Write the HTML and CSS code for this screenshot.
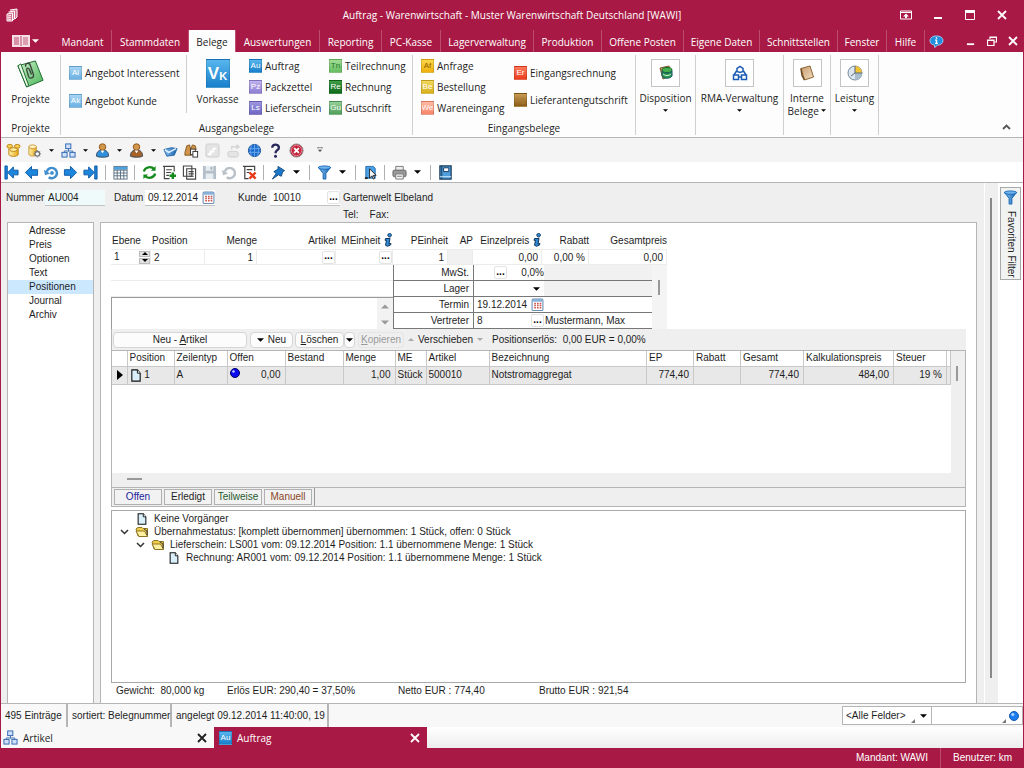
FILE: index.html
```html
<!DOCTYPE html>
<html lang="de">
<head>
    <meta charset="UTF-8">
    <meta name="viewport" content="width=device-width, initial-scale=1.0">
    <title>Auftrag - Warenwirtschaft</title>
    <link rel="stylesheet" href="styles.css">
</head>
<body>

    <svg class="sprite" aria-hidden="true">
        <defs>
            <linearGradient id="gGold" x1="0" x2="1"><stop offset="0" stop-color="#fff3b0"/><stop offset="1" stop-color="#eaa916"/></linearGradient>
            <linearGradient id="gBlue" x1="0" x2="1"><stop offset="0" stop-color="#8cc4f5"/><stop offset="1" stop-color="#155fa8"/></linearGradient>
            <linearGradient id="gGreen" x1="0" x2="1" y2="1"><stop offset="0" stop-color="#c9efc9"/><stop offset="1" stop-color="#4cb65a"/></linearGradient>
            <linearGradient id="gTan" x1="0" x2="1" y2="1"><stop offset="0" stop-color="#c79b6c"/><stop offset="1" stop-color="#f3e0c4"/></linearGradient>
        </defs>
        <symbol id="net" viewBox="0 0 16 16"><path d="M8 6v3M3.500 10.500V8.500h9v2" fill="none" stroke="#3c6fb4"/><g fill="#cfe0fb" stroke="#2e64b0"><rect x="5" y="1" width="5.500" height="5"/><rect x="1" y="10" width="5.500" height="5"/><rect x="9.500" y="10" width="5.500" height="5"/></g></symbol>
        <symbol id="page" viewBox="0 0 12 14"><path d="M1.500 1h6l3 3.500V13h-9z" fill="#d9f0fb" stroke="#111" stroke-width="1.200"/><path d="M7.500 1v3.500h3" fill="#fff" stroke="#111"/></symbol>
        <symbol id="folder" viewBox="0 0 14 12"><path d="M1 3l2-1.500h4l1 1h4.500V10H3z" fill="#f2cd4a" stroke="#8d7424"/><path d="M1 5h8.500l3 5.500H4z" fill="#fff0a0" stroke="#8d7424"/><path d="M9 3l3 2v4" fill="none" stroke="#3b3b3b"/></symbol>
        <symbol id="cal" viewBox="0 0 12 12"><rect x="1" y="1" width="10" height="10.500" rx="1" fill="#fff" stroke="#6b8fb5"/><path d="M1.500 1.500h9v2h-9z" fill="#86b4dd"/><path d="M3 5h1.500M5.500 5H7M8 5h1.500M3 7h1.500M5.500 7H7M8 7h1.500M3 9h1.500M5.500 9H7M8 9h1.500" stroke="#d0504a" stroke-width="1.400"/></symbol>
        <symbol id="info" viewBox="0 0 10 14"><path d="M5.500 .800a1.800 1.800 0 1 1 1 3.200 1.800 1.800 0 0 1-1-3.200zM2.500 5.500H7L6 11l2-.500-.500 1.500-3 1.300-2-1 1-5H2z" fill="#2f8ad6" stroke="#12365c"/></symbol>
        <symbol id="funnel" viewBox="0 0 16 16"><path d="M1.500 2.500L6.500 9v6h3V9l5-6.500z" fill="url(#gBlue)" stroke="#1769b5"/><ellipse cx="8" cy="2.800" rx="6.500" ry="1.800" fill="#6eb2ee" stroke="#1769b5"/></symbol>
        <symbol id="down" viewBox="0 0 8 4"><path d="M0 0h8L4 4z"/></symbol>
        <symbol id="up" viewBox="0 0 8 4"><path d="M0 4h8L4 0z"/></symbol>
        <symbol id="grip" viewBox="0 0 4 4"><path d="M4 0v4H0z" fill="#777"/></symbol>
        <symbol id="close" viewBox="0 0 10 10"><path d="M1 1l8 8M9 1L1 9" fill="none" stroke="currentColor" stroke-width="1.800"/></symbol>
        <symbol id="arrow" viewBox="0 0 16 16"><path d="M1.500 8L8 1.500V5h6.500v6H8v3.500z" fill="#1c86dd" stroke="#0c5aa8"/></symbol>
        <symbol id="first" viewBox="0 0 16 16"><path d="M1 1h2.500v14H1zM4 8l6-6v3.500h5v5h-5V14z" fill="#1c86dd" stroke="#0c5aa8"/></symbol>
        <symbol id="undo" viewBox="0 0 16 16"><path d="M5 13A5.500 5.500 0 1 0 3 7" fill="none" stroke="currentColor" stroke-width="2.600"/><path d="M0 5l1 6 5.500-2z" fill="currentColor"/></symbol>
        <symbol id="person" viewBox="0 0 16 16"><path d="M1.500 14c0-4 2-6.500 6.500-6.500s6.500 2.500 6.500 6.500c-2 1.500-11 1.500-13 0z" fill="currentColor" stroke="#345"/><circle cx="8" cy="4.300" r="3.500" fill="#d5964a" stroke="#8a5a20"/><path d="M6 8l2 3 2-3z" fill="#fff"/></symbol>
    </svg>

    <header class="titlebar">
        <svg class="app-icon" viewBox="0 0 12 14"><path d="M4 2l7-1v8l-2 2M2.500 4l6-1v8l-2 1M1 6l5.500-1v8L1 13z" fill="#d6738f" stroke="#fff"/><path d="M2 8l3-.500M2 10l3-.500M2 12l3-.500" stroke="#fff"/></svg>
        <h1>Auftrag - Warenwirtschaft - Muster Warenwirtschaft Deutschland [WAWI]</h1>
        <div class="window-buttons">
            <button type="button" aria-label="Menüband"><svg viewBox="0 0 12 10" width="12" height="10"><path d="M.500 1h11v8H.500zM.500 2.500h11" fill="none" stroke="#fff"/><path d="M6 3.500l3 3H7V8H5V6.500H3z" fill="#fff"/></svg></button>
            <button type="button" aria-label="Minimieren"><svg viewBox="0 0 10 10" width="10" height="10"><path d="M1 7h8v2H1z" fill="#fff"/></svg></button>
            <button type="button" aria-label="Maximieren"><svg viewBox="0 0 10 10" width="10" height="10"><path d="M.500 1.500h9v8h-9z" fill="none" stroke="#fff"/><path d="M0 0h10v3H0z" fill="#fff"/></svg></button>
            <button type="button" aria-label="Schließen"><svg width="10" height="10"><use href="#close"/></svg></button>
        </div>
    </header>

    <nav class="menubar">
        <button type="button" class="file-menu" aria-label="Datei">
            <svg viewBox="0 0 18 12" width="18" height="12"><path d="M0 0h18v12H0z" fill="#f6dfe6"/><path d="M9 1v10M2 3h5M2 5h5M2 7h5M2 9h5" stroke="#b7476a"/><path d="M11 2h5v8h-5z" fill="#dc9fb1"/></svg>
            <svg width="7" height="4" fill="#fff"><use href="#down"/></svg>
        </button>
        <a href="#">Mandant</a>
        <a href="#">Stammdaten</a>
        <a href="#" class="active">Belege</a>
        <a href="#">Auswertungen</a>
        <a href="#">Reporting</a>
        <a href="#">PC-Kasse</a>
        <a href="#">Lagerverwaltung</a>
        <a href="#">Produktion</a>
        <a href="#">Offene Posten</a>
        <a href="#">Eigene Daten</a>
        <a href="#">Schnittstellen</a>
        <a href="#">Fenster</a>
        <a href="#">Hilfe</a>
        <button type="button" class="help" aria-label="Info"><svg viewBox="0 0 16 14" width="15" height="13"><path d="M8 1c4 0 7 2 7 5s-3 5-6 5l-3 2.500V11C3 10.500 1 9 1 6s3-5 7-5z" fill="#1f8fe0" stroke="#9fd2f7"/><path d="M8 2.500v1.500M6.500 5.500H8V9M6.500 9h3" fill="none" stroke="#fff" stroke-width="1.500"/></svg></button>
        <div class="mdi-buttons">
            <button type="button" aria-label="Fenster minimieren"><svg viewBox="0 0 10 10" width="9" height="9"><path d="M1 7h8v2H1z" fill="#fff"/></svg></button>
            <button type="button" aria-label="Fenster wiederherstellen"><svg viewBox="0 0 10 10" width="10" height="10"><path d="M3 3V1h6.500v5H7M.500 4H7v5.500H.500zM0 4.500h7M3 1.500h7" fill="none" stroke="#fff" stroke-width="1.200"/></svg></button>
            <button type="button" aria-label="Fenster schließen"><svg width="10" height="10"><use href="#close"/></svg></button>
        </div>
    </nav>

    <section class="ribbon">
        <div class="group projects">
            <div class="group-body">
                <button type="button" class="big">
                    <svg viewBox="0 0 30 30" width="29" height="29"><path d="M2 7L20 2l8 20-17 7z" fill="url(#gGreen)" stroke="#1b6a2a"/><path d="M2 7l3-2 8 22-2 2z" fill="#e8f6e8" stroke="#1b6a2a"/><path d="M10 8c-1-4 4-5 5-1l3 9c1 4-4 5-5 2L11 11c0-2 2-2 3 0l2 5" fill="none" stroke="#3a463a" stroke-width="1.400"/></svg>
                    <span>Projekte</span>
                </button>
            </div>
            <h2>Projekte</h2>
        </div>

        <div class="group sales">
            <div class="group-body">
                <div class="stack two divided">
                    <button type="button"><i class="tile sky">Ai</i>Angebot Interessent</button>
                    <button type="button"><i class="tile sky">Ak</i>Angebot Kunde</button>
                </div>
                <button type="button" class="big"><i class="tile large blue">V<small>K</small></i><span>Vorkasse</span></button>
                <div class="stack">
                    <button type="button"><i class="tile blue">Au</i>Auftrag</button>
                    <button type="button"><i class="tile violet">Pz</i>Packzettel</button>
                    <button type="button"><i class="tile purple">Ls</i>Lieferschein</button>
                </div>
                <div class="stack">
                    <button type="button"><i class="tile light-green">Tn</i>Teilrechnung</button>
                    <button type="button"><i class="tile green">Re</i>Rechnung</button>
                    <button type="button"><i class="tile mid-green">Gu</i>Gutschrift</button>
                </div>
            </div>
            <h2>Ausgangsbelege</h2>
        </div>

        <div class="group purchase">
            <div class="group-body">
                <div class="stack">
                    <button type="button"><i class="tile amber">Af</i>Anfrage</button>
                    <button type="button"><i class="tile yellow">Be</i>Bestellung</button>
                    <button type="button"><i class="tile salmon">We</i>Wareneingang</button>
                </div>
                <div class="stack two">
                    <button type="button"><i class="tile red">Er</i>Eingangsrechnung</button>
                    <button type="button"><i class="tile brown">Lg</i>Lieferantengutschrift</button>
                </div>
            </div>
            <h2>Eingangsbelege</h2>
        </div>

        <button type="button" class="group big framed w60">
            <i class="frame"><svg viewBox="0 0 16 16" width="16" height="16"><path d="M2 3l9-2 3 9-9 4z" fill="#cfa36a" stroke="#7b5a2c"/><ellipse cx="9" cy="5" rx="5" ry="2.500" fill="#48b04f" stroke="#176a2c"/><path d="M4 6v5c2 3 8 3 10 0V6c-2 3-8 3-10 0z" fill="#289a4e" stroke="#175a6c"/><path d="M5 9c2 2 6 2 8 0" fill="none" stroke="#d9f3d0"/></svg></i>
            <span>Disposition</span>
            <svg class="caret" width="5" height="3"><use href="#down"/></svg>
        </button>
        <button type="button" class="group big framed w88">
            <i class="frame"><svg viewBox="0 0 16 16" width="16" height="16" fill="none" stroke="#1b5bb5" stroke-width="1.500"><path d="M5 6.500V3.500L8 1.500l3 2v3L8 7.500zM4.500 6L2 10M11.500 6l2.500 4M1.500 10h5v4.500h-5zM9.500 10h5v4.500h-5zM6.500 12h3"/></svg></i>
            <span>RMA-Verwaltung</span>
            <svg class="caret" width="5" height="3"><use href="#down"/></svg>
        </button>
        <button type="button" class="group big framed w47">
            <i class="frame"><svg viewBox="0 0 16 16" width="16" height="16"><path d="M2 3.500L11 1l3.500 11L5.500 15z" fill="url(#gTan)" stroke="#8b6334"/><path d="M2 3.500l1 7 2.500 4.500" fill="none" stroke="#6d4a20" stroke-width="1.500"/></svg></i>
            <span>Interne<br>Belege <svg class="inline-caret" width="5" height="3"><use href="#down"/></svg></span>
        </button>
        <button type="button" class="group big framed w48">
            <i class="frame"><svg viewBox="0 0 16 16" width="16" height="16"><circle cx="8" cy="8" r="7" fill="#dde6ee" stroke="#72889c"/><path d="M8 8V1a7 7 0 0 1 7 7z" fill="#f1c232"/><path d="M8 8h7a7 7 0 0 1-7 7z" fill="#a9bccb"/><path d="M8 1v7l-4 3M8 8h7" fill="none" stroke="#576b7c"/></svg></i>
            <span>Leistung</span>
            <svg class="caret" width="5" height="3"><use href="#down"/></svg>
        </button>
        <button type="button" class="collapse" aria-label="Menüband ausblenden"><svg viewBox="0 0 9 6" width="9" height="6"><path d="M1 5l3.500-3.500L8 5" fill="none" stroke="#555" stroke-width="1.800"/></svg></button>
    </section>

    <div class="toolbar quick">
        <button type="button" aria-label="Mandanten"><svg viewBox="0 0 16 16"><path d="M3 6v6c0 3 10 3 10 0V6" fill="url(#gGold)" stroke="#b97f12"/><ellipse cx="4" cy="3.500" rx="3" ry="2" fill="#fbd34f" stroke="#b97f12"/><ellipse cx="12" cy="3.500" rx="3" ry="2" fill="#fbd34f" stroke="#b97f12"/><ellipse cx="8" cy="7" rx="4" ry="2" fill="#fff0a0" stroke="#b97f12"/></svg></button>
        <button type="button" aria-label="Datenbank"><svg viewBox="0 0 16 16"><path d="M2 4v8c0 2.500 8 2.500 8 0V4" fill="url(#gGold)" stroke="#c9973a"/><ellipse cx="6" cy="4" rx="4" ry="2" fill="#fff3c0" stroke="#c9973a"/><circle cx="11" cy="11.500" r="2.500" fill="#fff" stroke="#777" stroke-width="1.500"/><path d="M11 7.500v1M11 14.500v1M7 11.500h1M14 11.500h1M8.500 9l.700.700M13 13.500l.700.700M13.700 9l-.700.700M8.500 14l.700-.700" stroke="#777"/></svg></button>
        <button type="button" class="drop" aria-label="Auswahl"><svg><use href="#down"/></svg></button>
        <button type="button" aria-label="Artikel"><svg><use href="#net"/></svg></button>
        <button type="button" class="drop" aria-label="Auswahl"><svg><use href="#down"/></svg></button>
        <button type="button" aria-label="Kunden" class="c-blue"><svg><use href="#person"/></svg></button>
        <button type="button" class="drop" aria-label="Auswahl"><svg><use href="#down"/></svg></button>
        <button type="button" aria-label="Lieferanten" class="c-brown"><svg><use href="#person"/></svg></button>
        <button type="button" class="drop" aria-label="Auswahl"><svg><use href="#down"/></svg></button>
        <button type="button" aria-label="Belege"><svg viewBox="0 0 16 16"><path d="M1 7l8-2 6 1-3 7-8 1z" fill="url(#gBlue)" stroke="#2468a8"/><path d="M2 7l4 3 8-4" fill="none" stroke="#e3f2ff" stroke-width="1.500"/></svg></button>
        <button type="button" aria-label="Suchen"><svg viewBox="0 0 16 16"><path d="M1 10l2-7 3-1 1 5 2-5 3 1 1 4H8v6H1z" fill="#d0954a" stroke="#85561c"/><g fill="#fff" stroke="#333"><rect x="7" y="6.500" width="5" height="6"/><rect x="9.500" y="9" width="5" height="6"/></g></svg></button>
        <button type="button" aria-label="Diagramm" disabled><svg viewBox="0 0 16 16"><rect x="1" y="1" width="14" height="14" rx="2" fill="#e4e4e4" stroke="#cfcfcf"/><path d="M3 12h3V9h3V6h3" fill="none" stroke="#fff" stroke-width="2"/></svg></button>
        <button type="button" aria-label="Export" disabled><svg viewBox="0 0 16 16"><rect x="2" y="9" width="11" height="6" rx="2" fill="#e4e4e4" stroke="#cfcfcf"/><path d="M6 7V4h7M11 2l3 2-3 2" fill="none" stroke="#d5d5d5" stroke-width="1.500"/></svg></button>
        <button type="button" aria-label="Internet"><svg viewBox="0 0 16 16"><circle cx="8" cy="8" r="6.500" fill="#1f6fd0" stroke="#164f98"/><path d="M2 6h12M2 10h12M8 1.500v13M5 2.500c-2 3-2 8 0 11M11 2.500c2 3 2 8 0 11" fill="none" stroke="#6aa6ea"/></svg></button>
        <button type="button" aria-label="Hilfe"><svg viewBox="0 0 16 16"><path d="M4.500 5c0-5 8-4 7 .500C11 8 8 7.500 8 11" fill="none" stroke="#26265c" stroke-width="2.500"/><circle cx="8" cy="14" r="1.600" fill="#26265c"/></svg></button>
        <button type="button" aria-label="Beenden"><svg viewBox="0 0 16 16"><circle cx="8" cy="8" r="7" fill="#c3243c" stroke="#8e8e8e"/><circle cx="8" cy="8" r="5.500" fill="none" stroke="#eb8794"/><path d="M5.500 5.500l5 5M10.500 5.500l-5 5" stroke="#fff" stroke-width="2"/></svg></button>
        <button type="button" class="more" aria-label="Anpassen"><svg viewBox="0 0 8 7" width="6" height="6"><path d="M0 .500h8" stroke="#555"/><path d="M1 3h6L4 6z" fill="#555"/></svg></button>
    </div>

    <div class="toolbar nav">
        <button type="button" aria-label="Erster"><svg><use href="#first"/></svg></button>
        <button type="button" aria-label="Zurück"><svg><use href="#arrow"/></svg></button>
        <button type="button" aria-label="Aktualisieren" class="c-mid"><svg viewBox="0 0 16 16"><use href="#undo" width="16" height="16"/><circle cx="8.500" cy="8.500" r="2" fill="#3f8dcc"/></svg></button>
        <button type="button" aria-label="Weiter" class="flip"><svg><use href="#arrow"/></svg></button>
        <button type="button" aria-label="Letzter" class="flip"><svg><use href="#first"/></svg></button>
        <span class="sep"></span>
        <button type="button" aria-label="Tabelle"><svg viewBox="0 0 16 16"><rect x="1" y="1.500" width="14" height="13.500" fill="#fff" stroke="#5c6f82"/><path d="M1 2h14v3H1z" fill="#4aa3e0"/><path d="M1 5.500h14M1 8.500h14M1 11.500h14M4.500 5v10M8 5v10M11.500 5v10" stroke="#5c6f82"/></svg></button>
        <span class="sep"></span>
        <button type="button" aria-label="Neu laden"><svg viewBox="0 0 16 16" fill="none" stroke="#158a1c" stroke-width="2.400"><path d="M2 7c1-5 8-6 11-2.500M14 9c-1 5-8 6-11 2.500"/><path d="M14.500 1v5H9.500zM1.500 15v-5h5z" fill="#158a1c" stroke="none"/></svg></button>
        <button type="button" aria-label="Neu"><svg viewBox="0 0 16 16"><path d="M13 7V1.500H2.500v13H8M1 1.500h2M4.500 5h6M4.500 8h5M4.500 11h3" fill="none" stroke="#444" stroke-width="1.200"/><path d="M11.500 8v7M8 11.500h7" stroke="#158a1c" stroke-width="2.600"/></svg></button>
        <button type="button" aria-label="Kopieren"><svg viewBox="0 0 16 16" fill="#fff" stroke="#444" stroke-width="1.200"><path d="M1.500 1h9v11h-9zM5 4h9.500v11H5z"/><path d="M7 7h5.500M7 9.500h5.500M7 12h5.500"/></svg></button>
        <button type="button" aria-label="Speichern" disabled><svg viewBox="0 0 16 16"><path d="M1 1h14v14H1z" fill="#b4bfca"/><path d="M4 1h8v5H4zM4 9h8v6H4z" fill="#e8edf1"/><path d="M9 2h2v3H9z" fill="#a4b0bc"/></svg></button>
        <button type="button" aria-label="Rückgängig" class="c-grey" disabled><svg><use href="#undo"/></svg></button>
        <button type="button" aria-label="Löschen"><svg viewBox="0 0 16 16"><path d="M13.500 6V1.500H3v13h4M1 1.500h3M5 5h6M5 8h3" fill="none" stroke="#444" stroke-width="1.300"/><path d="M8 8l6.500 6.500M14.500 8L8 14.500" stroke="#e93a1c" stroke-width="2.600"/></svg></button>
        <span class="sep"></span>
        <button type="button" aria-label="Anheften"><svg viewBox="0 0 16 16"><path d="M7.500 1.500l7 4.500-2 1-1.500 5-3-1.500L1.500 15 5.500 9 3 7l4.500-2.500z" fill="#1b78c8" stroke="#124a82"/></svg></button>
        <button type="button" class="drop" aria-label="Auswahl"><svg><use href="#down"/></svg></button>
        <span class="sep"></span>
        <button type="button" aria-label="Filter"><svg><use href="#funnel"/></svg></button>
        <button type="button" class="drop" aria-label="Auswahl"><svg><use href="#down"/></svg></button>
        <span class="sep"></span>
        <button type="button" aria-label="Auswählen"><svg viewBox="0 0 16 16"><path d="M3 1.500h8l2 2V14H3z" fill="#4ba1e8" stroke="#246aa8"/><path d="M7 4v10l2.500-2.500 1.500 3.500 1.500-.500-1.500-3.500h3z" fill="#fff" stroke="#222"/><path d="M2 13h3v2H2z" fill="#222"/></svg></button>
        <span class="sep"></span>
        <button type="button" aria-label="Drucken"><svg viewBox="0 0 16 16"><path d="M4 1.500h8V6H4z" fill="#eee" stroke="#777"/><rect x="1" y="5.500" width="14" height="7" rx="1.500" fill="#999" stroke="#666"/><path d="M4 9.500h8V15H4z" fill="#f3f3f3" stroke="#777"/><path d="M5.500 12h5" stroke="#777"/></svg></button>
        <button type="button" class="drop" aria-label="Auswahl"><svg><use href="#down"/></svg></button>
        <span class="sep"></span>
        <button type="button" aria-label="Handbuch"><svg viewBox="0 0 16 16"><path d="M2 1h12v14H2z" fill="#4f9edb" stroke="#173a5c" stroke-width="1.300"/><path d="M4 1v14" stroke="#173a5c"/><path d="M6 3h5.500v4H6z" fill="#fff" stroke="#173a5c"/><path d="M2 12.500h12" stroke="#d9ecfb"/></svg></button>
    </div>

    <main class="workspace">
        <div class="document">
            <form class="head-fields">
                <label for="nummer">Nummer</label>
                <input id="nummer" class="tinted" value="AU004">
                <label for="datum">Datum</label>
                <span class="field"><input id="datum" value="09.12.2014"><button type="button" aria-label="Kalender"><svg width="13" height="13"><use href="#cal"/></svg></button></span>
                <label for="kunde">Kunde</label>
                <span class="field"><input id="kunde" value="10010"><button type="button" class="dots" aria-label="Kunde suchen">...</button></span>
                <p>Gartenwelt Elbeland</p>
                <p class="contact"><span>Tel:</span><span>Fax:</span></p>
            </form>

            <div class="columns">
                <ul class="sections">
                    <li><a href="#">Adresse</a></li>
                    <li><a href="#">Preis</a></li>
                    <li><a href="#">Optionen</a></li>
                    <li><a href="#">Text</a></li>
                    <li class="active"><a href="#">Positionen</a></li>
                    <li><a href="#">Journal</a></li>
                    <li><a href="#">Archiv</a></li>
                </ul>

                <div class="panel">
                    <form class="entry">
                        <div class="entry-row">
                            <label for="ebene">Ebene</label>
                            <label for="position">Position</label>
                            <label for="menge" class="right">Menge</label>
                            <label for="artikel" class="right">Artikel</label>
                            <label for="meinheit" class="right">MEinheit <svg width="10" height="14"><use href="#info"/></svg></label>
                            <label for="peinheit" class="right">PEinheit</label>
                            <label for="ap" class="right">AP</label>
                            <label for="einzelpreis" class="right">Einzelpreis <svg width="10" height="14"><use href="#info"/></svg></label>
                            <label for="rabatt" class="right">Rabatt</label>
                            <label for="gesamtpreis" class="right">Gesamtpreis</label>
                        </div>
                        <div class="entry-row inputs">
                            <span class="field"><input id="ebene" value="1"><span class="spin"><button type="button" aria-label="höher"><svg width="6" height="3"><use href="#up"/></svg></button><button type="button" aria-label="tiefer"><svg width="6" height="3"><use href="#down"/></svg></button></span></span>
                            <input id="position" value="2">
                            <input id="menge" class="right" value="1">
                            <span class="field"><input id="artikel"><button type="button" class="dots" aria-label="Artikel suchen">...</button></span>
                            <span class="field"><input id="meinheit"><button type="button" class="dots" aria-label="Einheit suchen">...</button></span>
                            <input id="peinheit" class="right" value="1">
                            <input id="ap" class="off" disabled>
                            <input id="einzelpreis" class="right" value="0,00">
                            <input id="rabatt" class="right" value="0,00 %">
                            <input id="gesamtpreis" class="right" value="0,00">
                        </div>
                        <div class="entry-detail">
                            <div class="texts">
                                <input aria-label="Bezeichnung 1">
                                <input aria-label="Bezeichnung 2">
                                <div class="memo">
                                    <textarea aria-label="Langtext"></textarea>
                                    <span class="memo-scroll"><svg width="8" height="5"><use href="#up"/></svg><svg width="8" height="5"><use href="#down"/></svg></span>
                                </div>
                            </div>
                            <div class="props">
                                <label for="mwst">MwSt.</label>
                                <div class="field"><button type="button" class="dots" aria-label="MwSt. suchen">...</button><input id="mwst" class="right" value="0,0%"></div>
                                <div class="note off"></div>
                                <label for="lager">Lager</label>
                                <div class="field combo"><select id="lager"><option></option></select><svg width="7" height="4"><use href="#down"/></svg></div>
                                <div class="note off"></div>
                                <label for="termin">Termin</label>
                                <div class="field"><input id="termin" value="19.12.2014"><button type="button" aria-label="Kalender"><svg width="13" height="13"><use href="#cal"/></svg></button></div>
                                <div class="note"></div>
                                <label for="vertreter">Vertreter</label>
                                <div class="field"><input id="vertreter" value="8"><button type="button" class="dots" aria-label="Vertreter suchen">...</button></div>
                                <div class="note">Mustermann, Max</div>
                            </div>
                            <div class="props-scroll"><span></span></div>
                        </div>
                    </form>

                    <div class="grid-box">
                        <div class="commands">
                            <button type="button" class="new-article"><span>Neu - <u>A</u>rtikel</span></button>
                            <button type="button" class="new"><svg width="7" height="4"><use href="#down"/></svg> Neu</button>
                            <button type="button" class="delete"><u>L</u>öschen</button>
                            <button type="button" class="delete-more" aria-label="Löschen Auswahl"><svg width="7" height="4"><use href="#down"/></svg></button>
                            <button type="button" class="copy" disabled><u>K</u>opieren</button>
                            <button type="button" class="plain" aria-label="nach oben"><svg width="6" height="3"><use href="#up"/></svg></button>
                            <span>Verschieben</span>
                            <button type="button" class="plain" aria-label="nach unten"><svg width="6" height="3"><use href="#down"/></svg></button>
                            <span class="profit">Positionserlös:&nbsp; 0,00 EUR = 0,00%</span>
                        </div>
                        <div class="grid-area">
                            <div class="grid-scroll">
                                <table>
                                    <colgroup><col class="w15"><col class="w47"><col class="w53"><col class="w58"><col class="w58"><col class="w52"><col class="w31"><col class="w63"><col><col class="w47"><col class="w47"><col class="w63"><col class="w90"><col class="w53"><col class="w4"></colgroup>
                                    <thead>
                                        <tr><th></th><th>Position</th><th>Zeilentyp</th><th>Offen</th><th>Bestand</th><th>Menge</th><th>ME</th><th>Artikel</th><th>Bezeichnung</th><th>EP</th><th>Rabatt</th><th>Gesamt</th><th>Kalkulationspreis</th><th>Steuer</th><th></th></tr>
                                    </thead>
                                    <tbody>
                                        <tr>
                                            <td><svg viewBox="0 0 6 10" width="6" height="10"><path d="M0 0l6 5-6 5z"/></svg></td>
                                            <td><svg width="12" height="13"><use href="#page"/></svg> 1</td>
                                            <td>A</td>
                                            <td><span class="split"><svg viewBox="0 0 10 10" width="10" height="10"><circle cx="5" cy="5" r="4.500" fill="#0b0bf0" stroke="#000060"/><circle cx="3.500" cy="3.500" r="1.200" fill="#cfd4ff"/></svg>0,00</span></td>
                                            <td></td>
                                            <td class="right">1,00</td>
                                            <td>Stück</td>
                                            <td>500010</td>
                                            <td>Notstromaggregat</td>
                                            <td class="right">774,40</td>
                                            <td></td>
                                            <td class="right">774,40</td>
                                            <td class="right">484,00</td>
                                            <td class="right">19 %</td>
                                            <td></td>
                                        </tr>
                                    </tbody>
                                </table>
                            </div>
                            <div class="v-scroll"><span></span></div>
                            <div class="h-scroll"><span></span></div>
                        </div>
                        <div class="legend">
                            <button type="button" class="open">Offen</button>
                            <button type="button">Erledigt</button>
                            <button type="button" class="part">Teilweise</button>
                            <button type="button" class="manual">Manuell</button>
                            <span></span>
                        </div>
                    </div>

                    <ul class="tree">
                        <li class="l2"><svg class="ico" width="12" height="12"><use href="#page"/></svg>Keine Vorgänger</li>
                        <li class="l0"><svg class="tw" viewBox="0 0 9 6" width="9" height="6"><path d="M1 1l3.500 3.500L8 1"/></svg><svg class="ico" width="13" height="12"><use href="#folder"/></svg>Übernahmestatus: [komplett übernommen] übernommen: 1 Stück, offen: 0 Stück</li>
                        <li class="l1"><svg class="tw" viewBox="0 0 9 6" width="9" height="6"><path d="M1 1l3.500 3.500L8 1"/></svg><svg class="ico" width="13" height="12"><use href="#folder"/></svg>Lieferschein: LS001 vom: 09.12.2014 Position: 1.1 übernommene Menge: 1 Stück</li>
                        <li class="l3"><svg class="ico" width="12" height="12"><use href="#page"/></svg>Rechnung: AR001 vom: 09.12.2014 Position: 1.1 übernommene Menge: 1 Stück</li>
                    </ul>

                    <div class="totals">
                        <span>Gewicht:&nbsp; 80,000 kg</span>
                        <span>Erlös EUR: 290,40 = 37,50%</span>
                        <span>Netto EUR : 774,40</span>
                        <span>Brutto EUR : 921,54</span>
                    </div>
                </div>
            </div>
        </div>
        <div class="doc-scroll"><span></span></div>
        <aside>
            <button type="button" class="favorites"><svg width="15" height="15"><use href="#funnel"/></svg><span>Favoriten Filter</span></button>
        </aside>
    </main>

    <div class="status">
        <span>495 Einträge</span>
        <span>sortiert: Belegnummer</span>
        <span>angelegt 09.12.2014 11:40:00, 19</span>
        <div class="search">
            <div class="combo"><select aria-label="Suchfeld"><option>&lt;Alle Felder&gt;</option></select><svg class="grip" width="4" height="4"><use href="#grip"/></svg><svg width="7" height="4"><use href="#down"/></svg></div>
            <input aria-label="Suchbegriff">
            <svg class="grip" width="4" height="4"><use href="#grip"/></svg>
            <button type="button" aria-label="Suchen"><svg viewBox="0 0 10 10" width="10" height="10"><circle cx="5" cy="5" r="4.500" fill="#1a7cf0" stroke="#1559a8"/><circle cx="3.800" cy="3.500" r="1.600" fill="#a9d4ff"/></svg></button>
        </div>
    </div>

    <nav class="windows">
        <div class="window-tab"><svg width="15" height="15"><use href="#net"/></svg><a href="#">Artikel</a><button type="button" aria-label="Artikel schließen"><svg width="10" height="10"><use href="#close"/></svg></button></div>
        <div class="window-tab active"><i class="tile blue">Au</i><a href="#">Auftrag</a><button type="button" aria-label="Auftrag schließen"><svg width="10" height="10"><use href="#close"/></svg></button></div>
    </nav>

    <footer><span>Mandant: WAWI</span><span>Benutzer: km</span></footer>

</body>
</html>
```

FILE: styles.css
```css
* { box-sizing: border-box; }
body { margin: 0; min-height: 100vh; display: flex; flex-direction: column; border: solid #a81a45; border-width: 0 1px; background: #fff; color: #1e1e1e; font: 10px/14px "Liberation Sans", Arial, sans-serif; }
h1, h2, p, ul { margin: 0; padding: 0; font-weight: normal; list-style: none; }
a { color: inherit; text-decoration: none; }
button, input, select, textarea { font: inherit; color: inherit; margin: 0; padding: 0; border: 0; background: none; border-radius: 0; min-width: 0; }
button { display: flex; align-items: center; justify-content: center; white-space: nowrap; }
i { font-style: normal; }
svg { flex: none; }
.sprite { position: absolute; width: 0; height: 0; }
.right { text-align: right; }

/* title and menu */
.titlebar, .menubar, .ribbon, .windows { font-family: "Open Sans", "Noto Sans", sans-serif; }
.titlebar { display: grid; grid-template-columns: 1fr auto 1fr; align-items: center; height: 30px; padding: 0 5px; background: #a81a45; color: #fff; }
.titlebar h1 { font-size: 10px; }
.app-icon { width: 12px; height: 14px; }
.window-buttons { display: flex; justify-content: flex-end; }
.window-buttons button { width: 32px; height: 24px; color: #fff; }
.menubar { display: grid; grid-template-columns: 53px 58px 77px 47px 84px 62px 59px 93px 68px 82px 76px 78px 49px 38px 22px 1fr; height: 22px; background: #a81a45; color: #fff; }
.menubar a { display: flex; align-items: center; justify-content: center; padding-top: 2px; border-right: 1px solid #bd4d6e; white-space: nowrap; }
.menubar a.active { background: #fdfdfd; color: #1e1e1e; }
.file-menu { gap: 2px; padding-right: 4px; }
.mdi-buttons { display: flex; justify-content: flex-end; }
.mdi-buttons button { width: 21px; color: #fff; }

/* ribbon */
.ribbon { display: flex; height: 86px; padding-top: 3px; background: #fdfdfd; border-bottom: 1px solid #b5b5b5; }
.group { display: flex; flex-direction: column; border-right: 1px solid #cfcfcf; height: 80px; }
.group-body { display: flex; height: 67px; }
.group h2 { font-size: 10px; text-align: center; }
.projects { width: 60px; }
.projects .big { width: 100%; }
.sales { width: 352px; }
.purchase { width: 223px; }
.w60 { width: 60px; }
.w88 { width: 88px; }
.w48 { width: 48px; }
.big { flex-direction: column; justify-content: flex-start; padding-top: 4px; }
.sales .big { width: 61px; }
.big span { margin-top: 5px; line-height: 13px; }
.stack { display: flex; flex-direction: column; justify-content: space-between; align-items: flex-start; width: 80px; padding: 3px 0 5px 1px; }
.stack.two { padding-top: 10px; padding-bottom: 13px; }
.stack.two.divided { width: 126px; padding-bottom: 4px; padding-left: 8px; height: 58px; border-right: 1px solid #cfcfcf; }
.purchase .stack { width: 100px; padding-left: 8px; }
.purchase .stack.two { width: 122px; padding-left: 1px; }
.stack button { gap: 3px; height: 16px; }
.tile { display: flex; align-items: center; justify-content: center; flex: none; width: 13px; height: 14px; overflow: hidden; color: #fff; font: 8px/12px "Liberation Sans", Arial, sans-serif; background: #2b98dd; border: 1px solid rgba(0, 0, 0, 0.12); }
.tile.large { width: 24px; height: 29px; font-size: 17px; font-weight: bold; }
.tile small { font-size: 11px; padding-top: 4px; }
.sky { background: linear-gradient(#a6d4f4, #6cb2e4); }
.blue { background: linear-gradient(#57b6ec, #1a80cc); }
.violet { background: linear-gradient(#c0b2ec, #8f7fd4); }
.purple { background: linear-gradient(#9d97e0, #6f68c4); }
.light-green { background: linear-gradient(#a0dd94, #67bd62); color: #28752b; }
.green { background: linear-gradient(#3f9d45, #0f6b1b); }
.mid-green { background: linear-gradient(#93cf98, #519f5a); }
.amber { background: linear-gradient(#fbd64a, #efb10e); color: #8f6200; }
.yellow { background: linear-gradient(#f2d85f, #d9b01d); }
.salmon { background: linear-gradient(#ffb9a6, #fa8568); }
.red { background: linear-gradient(#fd7a5c, #ec3d1f); }
.brown { background: linear-gradient(#c79b52, #8a5d19); color: #a97833; }
.frame { display: flex; align-items: center; justify-content: center; width: 29px; height: 28px; border: 1px solid #c4c4c4; background: #fff; }
.w47 { width: 47px; }
.caret { margin-top: 4px; }
.inline-caret { vertical-align: 3px; }
.collapse { margin-left: auto; width: 33px; height: 20px; align-self: flex-end; }

/* toolbars */
.toolbar { display: flex; align-items: center; background: #fff; }
.toolbar button { width: 20px; height: 18px; }
.toolbar button svg { width: 15px; height: 15px; }
.quick { height: 24px; padding-left: 2px; background: #f4f4f4; }
.quick button { width: 21px; }
.quick .drop { width: 13px; }
.quick .drop svg { width: 5px; height: 3px; }
.quick .more { width: 26px; }
.quick .more svg { width: 6px; height: 6px; }
.nav { height: 21px; border-bottom: 1px solid #b5b5b5; }
.nav .drop { width: 17px; }
.nav .drop svg { width: 7px; height: 4px; }
.sep { width: 1px; height: 15px; margin: 0 4px; background: #b0b0b0; }
.flip { transform: scaleX(-1); }
.c-blue { color: #2f8fdc; }
.c-brown { color: #a5622a; }
.c-mid { color: #3f8dcc; }
.c-grey { color: #b9c0c7; }

/* workspace */
.workspace { flex: 1; display: flex; background: #efefef; }
.document { flex: 1; min-width: 0; display: flex; flex-direction: column; border-right: 1px solid #fff; }
.head-fields { display: grid; grid-template-columns: 39px 69px 31px 93px 32px 71px 1fr; grid-template-rows: 16px 16px; padding: 7px 0 0 5px; line-height: 16px; }
.head-fields > input { width: 60px; padding-left: 3px; }
.head-fields .field { width: 70px; padding-left: 3px; }
.head-fields > input, .head-fields .field { background: #fff; border-bottom: 1px solid #c2c2c2; }
.head-fields .tinted { background: #effbfb; }
.head-fields p { padding-left: 2px; }
.head-fields .contact { grid-column: 7; line-height: 18px; }
.contact span { margin-right: 11px; }
.field { display: flex; align-items: center; min-width: 0; }
.field input { flex: 1; width: 0; }
.dots { width: 13px; height: 13px; padding-bottom: 2px; border: 1px solid #e3e3e3; border-radius: 2px; background: #fff; font-weight: bold; color: #000; }
.columns { flex: 1; display: flex; gap: 6px; padding: 0 7px 0 6px; }
.sections { width: 87px; padding-top: 1px; background: #fff; border: 1px solid #b5b5b5; border-bottom: 0; }
.sections li { padding-left: 21px; }
.sections .active { background: #cce8ff; }
.panel { flex: 1; min-width: 0; display: flex; flex-direction: column; background: #fff; border: 1px solid #b5b5b5; border-bottom: 0; padding: 10px 10px 5px; }

.entry { width: 556px; }
.entry-row { display: grid; grid-template-columns: 40px 54px 52px 79px 57px 55px 25px 69px 47px 78px; }
.entry-row label { height: 16px; line-height: 16px; white-space: nowrap; }
.entry-row label:not(.right) { padding-left: 1px; }
.entry-row label svg { vertical-align: -3px; }
.inputs > * { height: 16px; border: solid #ececec; border-width: 1px 1px 1px 0; }
.inputs input { padding: 0 3px; }
.off { background: #f1f1f1; }
.spin { display: flex; flex-direction: column; gap: 1px; }
.spin button { width: 11px; height: 6px; background: #e2e2e2; border: 1px solid #bbb; }
.entry-detail { display: flex; }
.texts { width: 282px; display: flex; flex-direction: column; }
.texts > input { height: 16px; border-bottom: 1px solid #ececec; }
.memo { display: flex; height: 32px; border: solid #9a9a9a; border-width: 1px 0 0 1px; }
.memo textarea { flex: 1; resize: none; overflow: hidden; }
.memo-scroll { display: flex; flex-direction: column; justify-content: space-between; padding: 6px 4px 4px; width: 16px; background: #f2f2f2; fill: #999; }
.props { display: grid; grid-template-columns: 80px 70px 108px; grid-auto-rows: 16px; border-left: 1px solid #777; }
.props > * { border-bottom: 1px solid #777; line-height: 15px; }
.props label { padding-right: 4px; text-align: right; border-right: 1px solid #777; }
.props input { padding-left: 3px; }
.props .field .dots:first-child { margin-left: 20px; }
.combo { display: flex; align-items: center; }
.combo select { flex: 1; appearance: none; }
.props .combo svg { margin-right: 4px; }
.note { padding-left: 1px; }
.props-scroll { flex: 1; background: #f4f4f4; padding: 15px 0 0 6px; }
.props-scroll span { display: block; width: 2px; height: 15px; background: #999; }

.grid-box { border-left: 1px solid #b5b5b5; background: #efefef; }
.commands { display: flex; align-items: center; height: 21px; white-space: nowrap; }
.commands button { height: 16px; border: 1px solid #d5d5d5; border-radius: 4px; background: #fcfcfc; }
.commands .new-article { width: 134px; margin: 0 3px 0 1px; }
.commands .new { width: 43px; gap: 4px; margin-right: 2px; }
.commands .delete { width: 49px; }
.commands .delete-more { width: 11px; margin-right: 3px; }
.commands .copy { width: 46px; background: none; color: #9a9a9a; border-color: #e6e6e6; }
.commands .plain { border: 0; background: none; width: 14px; fill: #aaa; }
.profit { margin-left: 5px; }
.grid-area { display: grid; grid-template-columns: 1fr 14px; grid-template-rows: 122px 14px; border: solid #b5b5b5; border-width: 1px 1px 1px 0; }
.grid-scroll { background: #fff; overflow: hidden; }
table { width: 100%; table-layout: fixed; border-collapse: collapse; line-height: 14px; }
th, td { padding: 0 4px 0 2px; font-weight: normal; text-align: left; white-space: nowrap; border-right: 1px solid #c8c8c8; border-bottom: 1px solid #c8c8c8; }
th { height: 15px; }
td { height: 18px; background: #e9e8e8; }
td.right { text-align: right; }
th:first-child, td:first-child { padding-left: 5px; }
td svg { vertical-align: middle; }
.w15 { width: 15px; }
.w53 { width: 53px; }
.w58 { width: 58px; }
.w52 { width: 52px; }
.w31 { width: 31px; }
.w63 { width: 63px; }
.w90 { width: 90px; }
.w4 { width: 4px; }
.split { display: flex; justify-content: space-between; }
.v-scroll { padding: 15px 0 0 5px; }
.v-scroll span { display: block; width: 2px; height: 15px; background: #999; }
.h-scroll { grid-column: 1 / 3; padding: 5px 0 0 15px; }
.h-scroll span { display: block; width: 15px; height: 2px; background: #999; }
.legend { display: flex; align-items: center; gap: 2px; height: 19px; padding-left: 2px; border: solid #b5b5b5; border-width: 0 1px 1px 0; }
.legend button { width: 48px; height: 16px; border: 1px solid #b0b0b0; background: #f2f2f2; }
.legend span { align-self: stretch; border-left: 1px solid #999; }
.legend .open { color: #1c1c9c; }
.legend .part { color: #1f5a2c; }
.legend .manual { color: #8a4526; }

.tree { flex: 1; margin-top: 3px; padding-top: 1px; border: 1px solid #a9a9a9; line-height: 13px; }
.tree li { display: flex; align-items: center; height: 13px; }
.tree .ico { width: 14px; margin-right: 5px; }
.tree .tw { margin-right: 6px; fill: none; stroke: #333; stroke-width: 1.5; }
.tree .l0 { padding-left: 8px; }
.tree .l1 { padding-left: 24px; }
.tree .l2 { padding-left: 23px; }
.tree .l3 { padding-left: 55px; }
.totals { display: grid; grid-template-columns: 111px 171px 141px 1fr; padding: 1px 0 0 5px; }
.doc-scroll { width: 13px; padding: 15px 0 25px 5px; display: flex; }
.doc-scroll span { width: 2px; background: #888; }
aside { width: 25px; padding: 4px 2px; background: #fff; }
.favorites { flex-direction: column; gap: 6px; width: 21px; height: 93px; padding: 2px 0; border: 1px solid #a9a9a9; background: #f1f3f3; }
.favorites span { writing-mode: vertical-rl; }

/* bottom bars */
.status { display: grid; grid-template-columns: 67px 104px 157px 1fr; align-items: center; height: 24px; border-top: 1px solid #b5b5b5; background: #f8f8f8; }
.status > span { height: 23px; padding-left: 4px; line-height: 23px; white-space: nowrap; border-right: 2px solid #b5b5b5; }
.search { display: flex; justify-self: end; height: 19px; border: 1px solid #b5b5b5; background: #fff; }
.search .combo { width: 89px; padding: 0 4px 0 3px; border-right: 1px solid #b5b5b5; }
.search input { width: 70px; }
.search button { width: 16px; }
.search .grip { align-self: flex-end; margin-bottom: 1px; }
.combo .grip { margin-right: 5px; }
.windows { display: flex; height: 21px; background: linear-gradient(#fff, #ededed); }
.window-tab { display: flex; align-items: center; gap: 5px; width: 213px; padding: 0 7px 0 2px; background: #f8f8f8; }
.window-tab button { margin-left: auto; }
.window-tab.active { background: #a81a45; color: #fff; padding-left: 5px; }
footer { display: flex; justify-content: flex-end; height: 20px; line-height: 20px; padding-right: 11px; background: #a81a45; color: #fff; }
footer span + span { margin-left: 12px; padding-left: 12px; border-left: 1px solid #bd4d6e; }
```
